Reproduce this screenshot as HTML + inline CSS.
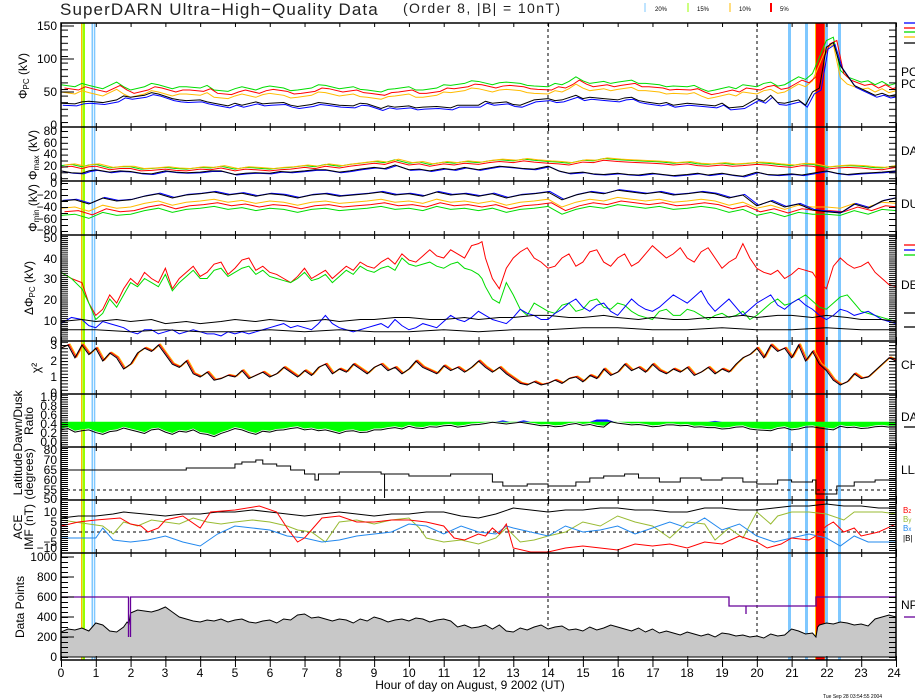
<!DOCTYPE html>
<html><head><meta charset="utf-8"><style>
html,body{margin:0;padding:0;background:#fff;width:915px;height:700px;overflow:hidden}
svg{display:block;font-family:"Liberation Sans",sans-serif}
.t{font-size:12px;fill:#000}
.yl{font-size:12px;text-anchor:end}
path,line,polyline{vector-effect:non-scaling-stroke}
.d path{fill:none;stroke-width:1}
</style></head><body>
<svg width="915" height="700" viewBox="0 0 915 700" xmlns="http://www.w3.org/2000/svg" xmlns:xlink="http://www.w3.org/1999/xlink">
<defs>
<pattern id="hp" x="61" y="0" width="34.7917" height="700" patternUnits="userSpaceOnUse"><rect x="0" y="0" width="1" height="700" fill="#000"/></pattern>
<pattern id="t1" x="0" y="23" width="10" height="6.6" patternUnits="userSpaceOnUse"><rect width="10" height="1" fill="#000"/></pattern>
<pattern id="t2" x="0" y="131" width="10" height="5.9" patternUnits="userSpaceOnUse"><rect width="10" height="1" fill="#000"/></pattern>
<pattern id="t3" x="0" y="183" width="10" height="6" patternUnits="userSpaceOnUse"><rect width="10" height="1" fill="#000"/></pattern>
<pattern id="t4" x="0" y="238" width="10" height="2.05" patternUnits="userSpaceOnUse"><rect width="10" height="1" fill="#000"/></pattern>
<pattern id="t5" x="0" y="345" width="10" height="3.2" patternUnits="userSpaceOnUse"><rect width="10" height="1" fill="#000"/></pattern>
<pattern id="t6" x="0" y="397" width="10" height="2.25" patternUnits="userSpaceOnUse"><rect width="10" height="1" fill="#000"/></pattern>
<pattern id="t7" x="0" y="450" width="10" height="2" patternUnits="userSpaceOnUse"><rect width="10" height="1" fill="#000"/></pattern>
<pattern id="t8" x="0" y="502" width="10" height="2" patternUnits="userSpaceOnUse"><rect width="10" height="1" fill="#000"/></pattern>
<pattern id="t9" x="0" y="557" width="10" height="5" patternUnits="userSpaceOnUse"><rect width="10" height="1" fill="#000"/></pattern>
</defs>
<rect width="915" height="700" fill="#fff"/>

<!-- marker bars -->
<rect x="81" y="23" width="1.2" height="637" fill="#fb0"/>
<rect x="82.5" y="23" width="2.5" height="637" fill="#9f0"/>
<rect x="91.5" y="23" width="1.5" height="637" fill="#7fc8ff"/>
<rect x="93.8" y="23" width="1.5" height="637" fill="#7fc8ff"/>
<rect x="788" y="23" width="3" height="637" fill="#7fc8ff"/>
<rect x="805" y="23" width="3" height="637" fill="#7fc8ff"/>
<rect x="825" y="23" width="3" height="637" fill="#7fc8ff"/>
<rect x="838" y="23" width="3" height="637" fill="#7fc8ff"/>
<rect x="815" y="23" width="10" height="637" fill="#fb0"/>
<rect x="816" y="23" width="8.5" height="637" fill="#f00"/>
<line x1="548" y1="23" x2="548" y2="660" stroke="#000" stroke-dasharray="3,3"/>
<line x1="757" y1="23" x2="757" y2="660" stroke="#000" stroke-dasharray="3,3"/>

<!-- P1 -->
<svg x="61" y="23" width="835" height="104" overflow="hidden" class="d"><g transform="translate(0,102) scale(3.479,-0.66)">
<path stroke="#fb0" transform="translate(0,-8)" d="M0 58L4 55 6 60 8 57 12 52 16 62 18 55 20 50 24 55 26 60 28 58 32 52 34 55 36 55 40 53 42 57 44 50 48 48 50 52 52 55 56 50 58 54 60 56 64 53 66 49 68 50 72 53 74 58 76 57 80 52 84 55 86 51 88 50 92 47 94 51 96 52 100 55 102 50 104 50 108 53 110 58 112 57 116 60 118 64 120 63 124 58 126 61 128 62 132 60 134 57 136 56 140 55 142 60 144 58 146 63 148 70 150 64 152 60 156 63 158 60 160 62 164 65 166 60 168 60 172 58 174 55 176 56 180 55 182 57 184 52 186 48 188 50 192 55 194 52 196 58 200 55 202 60 204 62 206 56 208 58 212 70 214 66 216 75 218 100 220 125 222 130 224 80 226 70 228 66 230 62 232 64 234 58 236 63 238 57 240 60"/>
<path stroke="#0d0" transform="translate(0,3)" d="M0 58L4 55 6 60 8 57 12 52 16 62 18 55 20 50 24 55 26 60 28 58 32 52 34 55 36 55 40 53 42 57 44 50 48 48 50 52 52 55 56 50 58 54 60 56 64 53 66 49 68 50 72 53 74 58 76 57 80 52 84 55 86 51 88 50 92 47 94 51 96 52 100 55 102 50 104 50 108 53 110 58 112 57 116 60 118 64 120 63 124 58 126 61 128 62 132 60 134 57 136 56 140 55 142 60 144 58 146 63 148 70 150 64 152 60 156 63 158 60 160 62 164 65 166 60 168 60 172 58 174 55 176 56 180 55 182 57 184 52 186 48 188 50 192 55 194 52 196 58 200 55 202 60 204 62 206 56 208 58 212 70 214 66 216 75 218 100 220 125 222 130 224 80 226 70 228 66 230 62 232 64 234 58 236 63 238 57 240 60"/>
<path stroke="#f00" transform="translate(1,-2)" d="M0 58L4 55 6 60 8 57 12 52 16 62 18 55 20 50 24 55 26 60 28 58 32 52 34 55 36 55 40 53 42 57 44 50 48 48 50 52 52 55 56 50 58 54 60 56 64 53 66 49 68 50 72 53 74 58 76 57 80 52 84 55 86 51 88 50 92 47 94 51 96 52 100 55 102 50 104 50 108 53 110 58 112 57 116 60 118 64 120 63 124 58 126 61 128 62 132 60 134 57 136 56 140 55 142 60 144 58 146 63 148 70 150 64 152 60 156 63 158 60 160 62 164 65 166 60 168 60 172 58 174 55 176 56 180 55 182 57 184 52 186 48 188 50 192 55 194 52 196 58 200 55 202 60 204 62 206 56 208 58 212 70 214 66 216 75 218 100 220 125 222 130 224 80 226 70 228 66 230 62 232 64 234 58 236 63 238 57 240 60"/>
<path stroke="#00f" transform="translate(0.5,-3)" d="M0 33L4 32 6 35 8 36 12 34 16 38 18 44 20 42 24 45 26 49 28 47 32 40 34 38 36 37 40 38 42 35 44 33 48 29 50 33 52 30 56 35 58 32 60 33 64 34 66 30 68 28 72 31 74 34 76 33 80 30 84 29 86 33 88 32 92 25 94 29 96 27 100 29 102 26 104 27 108 28 112 26 114 30 116 30 120 30 122 36 124 33 128 35 130 31 132 30 136 38 140 40 142 37 144 38 148 45 150 40 152 42 156 40 160 38 162 41 164 42 166 37 168 35 172 32 174 34 176 30 180 33 184 31 188 29 190 33 192 26 196 28 200 40 202 36 204 45 206 34 208 33 212 38 214 30 216 50 218 56 220 118 222 125 224 90 226 75 228 60 230 55 232 50 234 45 236 48 238 44 240 46"/>
<path stroke="#000" stroke-width="1.3" d="M0 33L4 32 6 35 8 36 12 34 16 38 18 44 20 42 24 45 26 49 28 47 32 40 34 38 36 37 40 38 42 35 44 33 48 29 50 33 52 30 56 35 58 32 60 33 64 34 66 30 68 28 72 31 74 34 76 33 80 30 84 29 86 33 88 32 92 25 94 29 96 27 100 29 102 26 104 27 108 28 112 26 114 30 116 30 120 30 122 36 124 33 128 35 130 31 132 30 136 38 140 40 142 37 144 38 148 45 150 40 152 42 156 40 160 38 162 41 164 42 166 37 168 35 172 32 174 34 176 30 180 33 184 31 188 29 190 33 192 26 196 28 200 40 202 36 204 45 206 34 208 33 212 38 214 30 216 50 218 56 220 118 222 125 224 90 226 75 228 60 230 55 232 50 234 45 236 48 238 44 240 46"/>
</g></svg>

<!-- P2 -->
<svg x="61" y="127" width="835" height="54" overflow="hidden" class="d"><g transform="translate(0,51) scale(3.479,-0.59)">
<path stroke="#0d0" transform="translate(0,3)" d="M0 18L3 20 6 16 8 19 10 20 14 14 17 16 20 16 23 12 26 13 30 15 33 13 36 12 40 15 43 14 46 17 50 12 53 15 56 14 60 12 63 14 66 15 70 18 73 16 76 20 80 17 83 20 86 22 90 25 93 23 96 28 100 22 103 24 106 20 110 24 113 22 116 25 120 23 123 26 126 28 130 26 133 29 136 27 140 25 143 24 146 22 150 27 153 26 156 30 160 28 163 27 166 26 170 25 173 24 176 22 180 24 183 21 186 20 190 22 193 20 196 21 200 23 203 22 206 20 210 18 213 21 216 20 220 15 223 17 226 18 230 17 233 15 236 14 240 18"/>
<path stroke="#fb0" transform="translate(1,4)" d="M0 18L3 20 6 16 8 19 10 20 14 14 17 16 20 16 23 12 26 13 30 15 33 13 36 12 40 15 43 14 46 17 50 12 53 15 56 14 60 12 63 14 66 15 70 18 73 16 76 20 80 17 83 20 86 22 90 25 93 23 96 28 100 22 103 24 106 20 110 24 113 22 116 25 120 23 123 26 126 28 130 26 133 29 136 27 140 25 143 24 146 22 150 27 153 26 156 30 160 28 163 27 166 26 170 25 173 24 176 22 180 24 183 21 186 20 190 22 193 20 196 21 200 23 203 22 206 20 210 18 213 21 216 20 220 15 223 17 226 18 230 17 233 15 236 14 240 18"/>
<path stroke="#f00" d="M0 18L3 20 6 16 8 19 10 20 14 14 17 16 20 16 23 12 26 13 30 15 33 13 36 12 40 15 43 14 46 17 50 12 53 15 56 14 60 12 63 14 66 15 70 18 73 16 76 20 80 17 83 20 86 22 90 25 93 23 96 28 100 22 103 24 106 20 110 24 113 22 116 25 120 23 123 26 126 28 130 26 133 29 136 27 140 25 143 24 146 22 150 27 153 26 156 30 160 28 163 27 166 26 170 25 173 24 176 22 180 24 183 21 186 20 190 22 193 20 196 21 200 23 203 22 206 20 210 18 213 21 216 20 220 15 223 17 226 18 230 17 233 15 236 14 240 18"/>
<path stroke="#00f" transform="translate(0.5,-1)" d="M0 12L3 9 6 8 8 12 10 14 14 10 17 12 20 11 23 8 26 7 30 12 33 10 36 9 40 10 43 12 46 12 50 6 53 8 56 9 60 8 63 11 66 10 70 12 73 14 76 14 80 10 83 12 86 15 90 18 93 16 96 22 100 14 103 15 106 12 110 16 113 14 116 18 120 14 123 17 126 20 130 18 133 16 136 15 140 20 143 12 146 8 150 10 153 7 156 6 160 8 163 6 166 5 170 8 173 6 176 4 180 6 183 8 186 5 190 8 193 5 196 3 200 10 203 6 206 5 210 7 213 5 216 8 220 12 223 8 226 6 230 8 233 9 236 10 240 12"/>
<path stroke="#000" stroke-width="1.2" d="M0 12L3 9 6 8 8 12 10 14 14 10 17 12 20 11 23 8 26 7 30 12 33 10 36 9 40 10 43 12 46 12 50 6 53 8 56 9 60 8 63 11 66 10 70 12 73 14 76 14 80 10 83 12 86 15 90 18 93 16 96 22 100 14 103 15 106 12 110 16 113 14 116 18 120 14 123 17 126 20 130 18 133 16 136 15 140 20 143 12 146 8 150 10 153 7 156 6 160 8 163 6 166 5 170 8 173 6 176 4 180 6 183 8 186 5 190 8 193 5 196 3 200 10 203 6 206 5 210 7 213 5 216 8 220 12 223 8 226 6 230 8 233 9 236 10 240 12"/>
</g></svg>

<!-- P3 -->
<svg x="61" y="181" width="835" height="54" overflow="hidden" class="d"><g transform="translate(0,2) scale(3.479,0.6)">
<path stroke="#0d0" transform="translate(0,24)" d="M0 30L4 28 8 35 12 25 16 30 20 28 24 22 28 18 32 25 36 20 40 18 44 15 48 20 52 17 56 22 60 18 64 20 68 25 72 20 76 18 80 22 84 20 88 18 92 15 96 20 100 18 104 22 108 15 112 20 116 18 120 22 124 18 128 25 132 20 136 18 140 15 144 28 148 20 152 15 156 18 160 12 164 15 168 18 172 15 176 20 180 18 184 15 188 18 192 25 196 20 200 30 204 25 208 32 212 25 216 28 220 28 224 30 228 22 232 28 236 20 240 22"/>
<path stroke="#f00" transform="translate(1,18)" d="M0 30L4 28 8 35 12 25 16 30 20 28 24 22 28 18 32 25 36 20 40 18 44 15 48 20 52 17 56 22 60 18 64 20 68 25 72 20 76 18 80 22 84 20 88 18 92 15 96 20 100 18 104 22 108 15 112 20 116 18 120 22 124 18 128 25 132 20 136 18 140 15 144 28 148 20 152 15 156 18 160 12 164 15 168 18 172 15 176 20 180 18 184 15 188 18 192 25 196 20 200 30 204 25 208 32 212 25 216 28 220 28 224 30 228 22 232 28 236 20 240 22"/>
<path stroke="#fb0" transform="translate(0,12)" d="M0 30L4 28 8 35 12 25 16 30 20 28 24 22 28 18 32 25 36 20 40 18 44 15 48 20 52 17 56 22 60 18 64 20 68 25 72 20 76 18 80 22 84 20 88 18 92 15 96 20 100 18 104 22 108 15 112 20 116 18 120 22 124 18 128 25 132 20 136 18 140 15 144 28 148 20 152 15 156 18 160 12 164 15 168 18 172 15 176 20 180 18 184 15 188 18 192 25 196 20 200 30 204 25 208 32 212 25 216 28 220 28 224 30 228 22 232 28 236 20 240 22"/>
<path stroke="#00f" transform="translate(0.5,-1)" d="M0 30L4 28 8 35 12 25 16 30 20 28 24 22 28 18 32 25 36 20 40 18 44 15 48 20 52 17 56 22 60 18 64 20 68 25 72 20 76 18 80 22 84 20 88 18 92 15 96 20 100 18 104 22 108 15 112 20 116 18 120 22 124 18 128 25 132 20 136 18 140 15 144 28 148 20 152 15 156 18 160 12 164 15 168 18 172 15 176 20 180 18 184 15 188 18 192 25 196 20 200 38 204 30 208 40 212 35 216 45 220 48 224 50 228 35 232 42 236 30 240 25"/>
<path stroke="#000" stroke-width="1.2" d="M0 30L4 28 8 35 12 25 16 30 20 28 24 22 28 18 32 25 36 20 40 18 44 15 48 20 52 17 56 22 60 18 64 20 68 25 72 20 76 18 80 22 84 20 88 18 92 15 96 20 100 18 104 22 108 15 112 20 116 18 120 22 124 18 128 25 132 20 136 18 140 15 144 28 148 20 152 15 156 18 160 12 164 15 168 18 172 15 176 20 180 18 184 15 188 18 192 25 196 20 200 38 204 30 208 40 212 35 216 45 220 48 224 50 228 35 232 42 236 30 240 25"/>
</g></svg>

<!-- P4 -->
<svg x="61" y="235" width="835" height="106" overflow="hidden" class="d"><g transform="translate(0,105) scale(3.479,-2.05)">
<path stroke="#f00" d="M0 33L3 30 6 28 8 18 10 12 12 15 14 22 16 18 18 25 20 30 22 27 24 33 26 30 28 28 30 35 32 25 34 30 36 33 38 36 40 31 42 33 44 37 46 38 48 32 50 35 52 39 54 40 56 34 58 36 60 33 62 32 64 30 66 28 68 31 70 35 72 30 74 32 76 34 78 30 80 33 82 36 84 34 86 38 88 36 90 35 92 38 94 40 96 37 98 42 100 39 102 38 104 41 106 44 108 41 110 40 112 44 114 42 116 40 118 46 120 47 121 48 122 40 124 30 126 25 128 35 130 40 132 43 134 45 136 40 138 38 140 35 142 36 144 40 146 42 148 36 150 38 152 43 154 44 156 38 158 36 160 40 162 42 164 36 166 38 168 42 170 46 172 43 174 40 176 42 178 45 180 40 182 38 184 43 186 45 188 40 190 35 192 38 194 40 196 47 198 40 200 35 202 33 204 32 206 34 208 30 210 32 212 35 214 34 216 33 218 28 220 25 222 36 224 40 226 37 228 35 230 36 232 38 234 33 236 30 238 27 240 26"/>
<path stroke="#0d0" d="M0 33L3 30 6 25 8 18 10 10 12 13 14 20 16 16 18 22 20 28 22 26 24 30 26 28 28 26 30 32 32 24 34 28 36 31 38 34 40 30 42 30 44 34 46 35 48 31 50 33 52 35 54 36 56 32 58 34 60 31 62 30 64 29 66 28 68 30 70 33 72 29 74 30 76 32 78 28 80 31 82 34 84 32 86 36 88 34 90 33 92 35 94 36 96 34 98 40 100 37 102 36 104 37 106 38 108 36 110 35 112 37 114 38 116 35 118 34 120 32 121 30 122 26 124 20 126 18 128 28 130 22 132 15 134 12 136 18 138 16 140 14 142 13 144 17 146 18 148 14 150 15 152 19 154 20 156 16 158 15 160 18 162 17 164 14 166 12 168 11 170 10 172 14 174 15 176 12 178 12 180 15 182 14 184 12 186 10 188 12 190 13 192 11 194 12 196 14 198 10 200 12 202 15 204 18 206 20 208 17 210 18 212 20 214 22 216 19 218 16 220 15 222 18 224 21 226 22 228 18 230 14 232 13 234 12 236 11 238 10 240 9"/>
<path stroke="#00f" d="M0 8L3 11 6 10 8 7 10 6 12 9 14 8 16 7 18 6 20 4 22 3 24 5 26 5 28 3 30 4 32 5 34 3 36 4 38 5 40 4 42 3 44 3 46 2 48 4 50 3 52 4 54 3 56 4 58 5 60 6 62 7 64 8 66 6 68 7 70 6 72 5 74 8 76 12 78 8 80 6 82 5 84 4 86 5 88 6 90 7 92 8 94 6 96 10 98 7 100 5 102 6 104 8 106 7 108 6 110 9 112 12 114 10 116 9 118 11 120 14 122 12 124 10 126 9 128 8 130 11 132 15 134 13 136 12 138 10 140 10 142 13 144 15 146 18 148 20 150 16 152 14 154 17 156 18 158 14 160 12 162 16 164 20 166 17 168 15 170 14 172 16 174 19 176 22 178 20 180 18 182 21 184 24 186 18 188 14 190 17 192 20 194 16 196 12 198 15 200 18 202 20 204 22 206 17 208 15 210 18 212 20 214 17 216 15 218 12 220 10 222 12 224 15 226 14 228 12 230 13 232 14 234 12 236 10 238 9 240 8"/>
<path stroke="#000" stroke-width="1.3" d="M0 9L6 10 10 9 16 10 20 9 26 10 30 8 36 9 40 8 46 9 50 10 56 9 60 10 66 9 70 9 76 10 80 9 86 10 90 10 96 11 100 11 106 10 110 10 116 11 120 10 126 11 130 11 136 12 140 12 146 11 150 11 156 12 160 11 166 10 170 11 176 10 180 10 186 11 190 11 196 12 200 11 206 12 210 12 216 11 220 12 226 11 230 10 236 10 240 9"/>
<path stroke="#000" stroke-width="1.3" d="M0 5L10 5 20 4 30 5 40 4 50 4 60 5 70 4 80 5 90 4 100 4 110 5 120 4 130 5 140 5 150 6 160 6 170 5 180 5 190 6 200 5 210 5 220 6 230 5 240 5"/>
</g></svg>

<!-- P5 -->
<svg x="61" y="341" width="835" height="53" overflow="hidden" class="d"><g transform="translate(0,52) scale(3.479,-16)">
<path stroke="#fb0" transform="translate(0.6,0.06)" d="M0 2.8L2 3 4 2.2 6 3 8 2.4 10 2.8 12 2 14 2.5 16 2.2 18 1.5 20 1.8 22 2.5 24 2.8 26 2.6 28 3 30 2.4 32 1.8 34 1.6 36 2 38 1.2 40 1 42 1.3 44 0.8 46 0.9 48 1.1 50 1 52 1.4 54 0.9 56 1.1 58 1.3 60 1 62 1.2 64 1.6 66 1.3 68 1 70 1.4 72 1.1 74 1.6 76 1.8 78 1.2 80 1.5 82 1.3 84 1.8 86 1.5 88 1.2 90 1.6 92 1.8 94 1.4 96 1.6 98 1.2 100 1.5 102 2 104 1.6 106 1.4 108 1.2 110 1.7 112 1.4 114 1.6 116 1.3 118 1.6 120 2 122 1.6 124 1.3 126 1.6 128 1.2 130 0.9 132 0.6 134 0.5 136 0.7 138 0.5 140 0.6 142 0.8 144 0.6 146 0.9 148 1 150 0.7 152 1.1 154 0.9 156 1.5 158 1.1 160 1.3 162 1.8 164 1.4 166 1.6 168 1.3 170 1.8 172 1.4 174 1.2 176 1.5 178 1.3 180 1.6 182 1.1 184 1.3 186 1.6 188 1.2 190 1.5 192 1.3 194 1.8 196 2.2 198 2.4 200 2.8 202 2.2 204 3 206 2.6 208 2.8 210 2.2 212 3 214 2 216 2.6 218 1.8 220 1.4 222 0.8 224 0.5 226 0.7 228 1.2 230 0.9 232 1 234 1.4 236 1.8 238 2.2 240 2"/>
<path stroke="#f00" transform="translate(0.3,0.04)" d="M0 2.8L2 3 4 2.2 6 3 8 2.4 10 2.8 12 2 14 2.5 16 2.2 18 1.5 20 1.8 22 2.5 24 2.8 26 2.6 28 3 30 2.4 32 1.8 34 1.6 36 2 38 1.2 40 1 42 1.3 44 0.8 46 0.9 48 1.1 50 1 52 1.4 54 0.9 56 1.1 58 1.3 60 1 62 1.2 64 1.6 66 1.3 68 1 70 1.4 72 1.1 74 1.6 76 1.8 78 1.2 80 1.5 82 1.3 84 1.8 86 1.5 88 1.2 90 1.6 92 1.8 94 1.4 96 1.6 98 1.2 100 1.5 102 2 104 1.6 106 1.4 108 1.2 110 1.7 112 1.4 114 1.6 116 1.3 118 1.6 120 2 122 1.6 124 1.3 126 1.6 128 1.2 130 0.9 132 0.6 134 0.5 136 0.7 138 0.5 140 0.6 142 0.8 144 0.6 146 0.9 148 1 150 0.7 152 1.1 154 0.9 156 1.5 158 1.1 160 1.3 162 1.8 164 1.4 166 1.6 168 1.3 170 1.8 172 1.4 174 1.2 176 1.5 178 1.3 180 1.6 182 1.1 184 1.3 186 1.6 188 1.2 190 1.5 192 1.3 194 1.8 196 2.2 198 2.4 200 2.8 202 2.2 204 3 206 2.6 208 2.8 210 2.2 212 3 214 2 216 2.6 218 1.8 220 1.4 222 0.8 224 0.5 226 0.7 228 1.2 230 0.9 232 1 234 1.4 236 1.8 238 2.2 240 2"/>
<path stroke="#000" stroke-width="1.3" d="M0 2.8L2 3 4 2.2 6 3 8 2.4 10 2.8 12 2 14 2.5 16 2.2 18 1.5 20 1.8 22 2.5 24 2.8 26 2.6 28 3 30 2.4 32 1.8 34 1.6 36 2 38 1.2 40 1 42 1.3 44 0.8 46 0.9 48 1.1 50 1 52 1.4 54 0.9 56 1.1 58 1.3 60 1 62 1.2 64 1.6 66 1.3 68 1 70 1.4 72 1.1 74 1.6 76 1.8 78 1.2 80 1.5 82 1.3 84 1.8 86 1.5 88 1.2 90 1.6 92 1.8 94 1.4 96 1.6 98 1.2 100 1.5 102 2 104 1.6 106 1.4 108 1.2 110 1.7 112 1.4 114 1.6 116 1.3 118 1.6 120 2 122 1.6 124 1.3 126 1.6 128 1.2 130 0.9 132 0.6 134 0.5 136 0.7 138 0.5 140 0.6 142 0.8 144 0.6 146 0.9 148 1 150 0.7 152 1.1 154 0.9 156 1.5 158 1.1 160 1.3 162 1.8 164 1.4 166 1.6 168 1.3 170 1.8 172 1.4 174 1.2 176 1.5 178 1.3 180 1.6 182 1.1 184 1.3 186 1.6 188 1.2 190 1.5 192 1.3 194 1.8 196 2.2 198 2.4 200 2.8 202 2.2 204 3 206 2.6 208 2.8 210 2.2 212 3 214 2 216 2.6 218 1.8 220 1.4 222 0.8 224 0.5 226 0.7 228 1.2 230 0.9 232 1 234 1.4 236 1.8 238 2.2 240 2"/>
</g></svg>

<!-- P6 -->
<svg x="61" y="394" width="835" height="53" overflow="hidden" class="d"><g transform="translate(0,48) scale(3.479,-45)">
<path fill="#0f0" stroke="none" style="fill:#0f0" d="M0 0.45L0 0.3 2 0.33 4 0.25 6 0.28 8 0.3 10 0.24 12 0.2 14 0.26 16 0.28 18 0.34 20 0.3 22 0.26 24 0.22 26 0.3 28 0.32 30 0.25 32 0.2 34 0.27 36 0.25 38 0.3 40 0.22 42 0.2 44 0.15 46 0.22 48 0.27 50 0.33 52 0.3 54 0.24 56 0.2 58 0.27 60 0.25 62 0.29 64 0.3 66 0.33 68 0.35 70 0.3 72 0.32 74 0.28 76 0.3 78 0.26 80 0.22 82 0.27 84 0.28 86 0.24 88 0.25 90 0.3 92 0.3 94 0.33 96 0.35 98 0.32 100 0.38 102 0.34 104 0.33 106 0.37 108 0.36 110 0.39 112 0.4 114 0.36 116 0.38 118 0.41 120 0.42 122 0.44 124 0.45 128 0.43 132 0.45 136 0.42 138 0.39 140 0.4 142 0.37 144 0.38 146 0.42 148 0.44 150 0.4 152 0.42 154 0.38 156 0.36 158 0.43 160 0.45 162 0.43 164 0.41 166 0.42 168 0.4 170 0.37 172 0.38 174 0.41 176 0.41 178 0.39 180 0.4 182 0.36 184 0.37 186 0.35 188 0.35 190 0.32 192 0.33 194 0.36 196 0.37 198 0.32 200 0.3 202 0.29 204 0.28 206 0.33 208 0.35 210 0.3 212 0.32 214 0.36 216 0.37 218 0.34 220 0.32 222 0.3 224 0.38 226 0.35 228 0.36 230 0.33 232 0.34 234 0.37 236 0.38 238 0.36 240 0.36L240 0.45Z"/>
<path fill="#00f" stroke="none" style="fill:#00f" d="M125 0.45L127 0.48 129 0.45Z M131 0.45L133 0.48 135 0.45Z M152 0.45L154 0.5 157 0.5 159 0.45Z M186 0.45L188 0.47 190 0.45Z"/>
<path stroke="#000" transform="translate(0,-0.03)" d="M0 0.3L2 0.33 4 0.25 6 0.28 8 0.3 10 0.24 12 0.2 14 0.26 16 0.28 18 0.34 20 0.3 22 0.26 24 0.22 26 0.3 28 0.32 30 0.25 32 0.2 34 0.27 36 0.25 38 0.3 40 0.22 42 0.2 44 0.15 46 0.22 48 0.27 50 0.33 52 0.3 54 0.24 56 0.2 58 0.27 60 0.25 62 0.29 64 0.3 66 0.33 68 0.35 70 0.3 72 0.32 74 0.28 76 0.3 78 0.26 80 0.22 82 0.27 84 0.28 86 0.24 88 0.25 90 0.3 92 0.3 94 0.33 96 0.35 98 0.32 100 0.38 102 0.34 104 0.33 106 0.37 108 0.36 110 0.39 112 0.4 114 0.36 116 0.38 118 0.41 120 0.42 122 0.44 124 0.47 128 0.43 132 0.47 136 0.42 138 0.39 140 0.4 142 0.37 144 0.38 146 0.42 148 0.44 150 0.4 152 0.42 154 0.38 156 0.36 158 0.48 160 0.45 162 0.43 164 0.41 166 0.42 168 0.4 170 0.37 172 0.38 174 0.41 176 0.41 178 0.39 180 0.4 182 0.36 184 0.37 186 0.35 188 0.35 190 0.32 192 0.33 194 0.36 196 0.37 198 0.32 200 0.3 202 0.29 204 0.28 206 0.33 208 0.35 210 0.3 212 0.32 214 0.36 216 0.37 218 0.34 220 0.32 222 0.3 224 0.38 226 0.35 228 0.36 230 0.33 232 0.34 234 0.37 236 0.38 238 0.36 240 0.36"/>
</g></svg>

<!-- P7 -->
<line x1="61" y1="490" x2="896" y2="490" stroke="#000" stroke-dasharray="3,3"/>
<svg x="61" y="447" width="835" height="53" overflow="hidden" class="d"><g transform="translate(0,23) scale(3.479,-2)">
<path stroke="#000" stroke-width="1.2" d="M0 0H36V1H50V3H52V4H56V5H58V3H62V2H66V0H70V-2H73V-5H74V-2H80V-1H92V-2H93V-14V-2H100V-3H112V-2H118V-2H124V-6H127V-8H134V-7H140V-8H148V-6H152V-4H156V-3H162V-2H166V-4H172V-6H178V-4H184V-5H190V-4H196V-6H200V-7H206V-5H210V-6H216V-5H217V-12H223V-8H228V-6H234V-5H240"/>
</g></svg>

<!-- P8 -->
<line x1="61" y1="532" x2="896" y2="532" stroke="#000" stroke-dasharray="3,3"/>
<svg x="61" y="500" width="835" height="53" overflow="hidden" class="d"><g transform="translate(0,32) scale(3.479,-2)">
<path stroke="#000" d="M0 7L5 8 10 8 15 9 18 10 24 9 30 8 35 9 40 9 45 10 50 10 55 11 60 10 65 9 70 8 75 9 80 10 85 9 90 8 95 9 100 9 105 10 110 10 115 8 120 7 125 9 130 12 135 11 140 10 145 11 150 11 155 12 160 12 165 11 170 11 175 10 180 10 185 12 190 12 195 11 200 11 205 12 210 13 215 13 220 14 225 13 230 13 235 12 240 12"/>
<path stroke="#9b3" d="M0 6L4 5 8 4 12 3 15 -1 18 5 22 3 26 6 30 5 34 4 38 7 42 5 46 4 50 5 55 6 60 5 65 3 68 1 72 0 76 -5 80 5 85 6 90 4 95 6 100 7 103 2 105 -3 110 -5 115 -4 120 -6 125 -3 128 2 132 -5 136 -4 140 -2 145 0 150 5 155 3 160 8 165 5 170 3 175 -3 180 5 185 4 188 -4 192 2 196 -3 200 10 204 4 206 8 210 10 215 10 220 9 225 6 228 10 232 10 236 10 240 9"/>
<path stroke="#28e" d="M0 -3L5 -3 10 -3 12 2 15 -4 20 -5 25 -4 30 -2 35 -5 40 -7 45 -1 50 3 55 2 60 1 65 -2 70 -3 75 -5 80 -4 85 -2 90 -1 95 0 100 4 105 3 110 -1 115 3 120 0 125 -1 128 3 130 2 135 0 140 -2 145 3 150 0 155 1 160 3 165 -1 170 2 175 5 180 2 185 7 190 1 195 4 200 -2 205 -5 210 -3 215 -1 220 -3 224 -7 228 -2 232 -5 236 -5 240 -5"/>
<path stroke="#f00" stroke-width="2.4" d="M0 3L5 5 10 6 17 7 20 4 23 3 25 0 28 2 30 6 35 8 40 2 43 10 50 11 57 13 62 10 65 2 68 -5 70 -3 75 7 80 8 85 5 90 5 95 6 100 6 105 5 110 3 113 -3 116 -4 120 -1 122 -2 124 2 126 -1 128 4 130 -8 135 -10 140 -10 145 -8 150 -7 155 -8 160 -9 165 -6 170 -7 175 -6 180 -8 185 -5 190 -6 195 -2 200 -5 203 -8 207 -6 210 -3 215 -4 217 -2 220 3 222 5 225 0 228 2 230 -2 235 0 240 4"/>
</g></svg>

<!-- P9 -->
<svg x="61" y="553" width="835" height="107" overflow="hidden" class="d"><g transform="translate(0,104) scale(3.479,-0.1)">
<path style="fill:#c8c8c8" stroke="#000" stroke-width="1.2" d="M0 0L0 250 2 280 4 270 6 290 8 260 10 340 12 320 14 260 16 250 18 300 19 350 19.5 330 20 440 22 470 24 460 26 450 28 470 30 500 32 450 34 400 36 380 38 360 40 350 42 370 44 360 46 380 48 350 50 370 52 380 54 350 56 340 58 360 60 370 62 340 64 380 66 370 68 420 70 430 72 390 74 400 76 380 78 360 80 380 82 370 84 340 86 380 88 360 90 400 92 380 94 350 96 370 98 380 100 360 102 390 104 380 106 350 108 370 110 380 112 360 114 300 116 320 118 290 120 300 122 320 124 280 126 320 128 260 130 250 132 290 134 270 136 300 138 320 140 280 142 300 144 310 146 270 148 280 150 260 152 300 154 270 156 290 158 320 160 300 162 280 164 260 166 290 168 250 170 280 172 240 174 260 176 240 178 220 180 250 182 230 184 210 186 230 188 200 190 240 192 230 194 210 196 220 198 200 200 210 202 190 204 230 206 210 208 220 210 280 212 260 214 230 216 240 217 200 217.5 300 218 320 220 340 222 330 224 350 226 340 228 320 230 330 232 310 234 380 236 400 238 420 240 400L240 0Z"/>
</g></svg>
<path d="M61 597H128.5V637M130.5 637V597H729V606H746V614M746.5 606H816V597H896" stroke="#609" fill="none" stroke-width="1.3"/>

<!-- axes -->
<g stroke="#000" stroke-width="1.5" fill="none">
<rect x="61" y="23" width="835" height="637"/>
<line x1="61" y1="127" x2="896" y2="127"/><line x1="61" y1="181" x2="896" y2="181"/>
<line x1="61" y1="235" x2="896" y2="235"/><line x1="61" y1="341" x2="896" y2="341"/>
<line x1="61" y1="394" x2="896" y2="394"/><line x1="61" y1="447" x2="896" y2="447"/>
<line x1="61" y1="500" x2="896" y2="500"/><line x1="61" y1="553" x2="896" y2="553"/>
</g>
<g fill="url(#hp)">
<rect x="61" y="23" width="836" height="4"/><rect x="61" y="123" width="836" height="8"/>
<rect x="61" y="177" width="836" height="8"/><rect x="61" y="231" width="836" height="8"/>
<rect x="61" y="337" width="836" height="8"/><rect x="61" y="390" width="836" height="8"/>
<rect x="61" y="443" width="836" height="8"/><rect x="61" y="496" width="836" height="8"/>
<rect x="61" y="549" width="836" height="8"/><rect x="61" y="656" width="836" height="11"/>
</g>
<g>
<rect x="61" y="24" width="7" height="102" fill="url(#t1)"/><rect x="889" y="24" width="7" height="102" fill="url(#t1)"/>
<rect x="61" y="128" width="7" height="52" fill="url(#t2)"/><rect x="889" y="128" width="7" height="52" fill="url(#t2)"/>
<rect x="61" y="182" width="7" height="52" fill="url(#t3)"/><rect x="889" y="182" width="7" height="52" fill="url(#t3)"/>
<rect x="61" y="236" width="7" height="104" fill="url(#t4)"/><rect x="889" y="236" width="7" height="104" fill="url(#t4)"/>
<rect x="61" y="342" width="7" height="51" fill="url(#t5)"/><rect x="889" y="342" width="7" height="51" fill="url(#t5)"/>
<rect x="61" y="395" width="7" height="51" fill="url(#t6)"/><rect x="889" y="395" width="7" height="51" fill="url(#t6)"/>
<rect x="61" y="448" width="7" height="51" fill="url(#t7)"/><rect x="889" y="448" width="7" height="51" fill="url(#t7)"/>
<rect x="61" y="501" width="7" height="51" fill="url(#t8)"/><rect x="889" y="501" width="7" height="51" fill="url(#t8)"/>
<rect x="61" y="554" width="7" height="105" fill="url(#t9)"/><rect x="889" y="554" width="7" height="105" fill="url(#t9)"/>
</g>
<g stroke="#000">
<line x1="61" y1="26" x2="74" y2="26"/><line x1="61" y1="59" x2="74" y2="59"/><line x1="61" y1="92" x2="74" y2="92"/>
<line x1="61" y1="557" x2="74" y2="557"/><line x1="61" y1="577" x2="74" y2="577"/><line x1="61" y1="597" x2="74" y2="597"/><line x1="61" y1="617" x2="74" y2="617"/><line x1="61" y1="637" x2="74" y2="637"/>
</g>

<text x="60" y="15" style="font-size:17px;letter-spacing:1.1px" fill="#222">SuperDARN Ultra−High−Quality Data</text>
<text x="403" y="13" style="font-size:14px;letter-spacing:1.4px" fill="#222">(Order 8, |B| = 10nT)</text>
<line x1="645" y1="3" x2="645" y2="12" stroke="#7fc8ff"/><text x="655" y="11" style="font-size:6px">20%</text>
<line x1="688" y1="3" x2="688" y2="12" stroke="#9f0"/><text x="697" y="11" style="font-size:6px">15%</text>
<line x1="730" y1="3" x2="730" y2="12" stroke="#fb0"/><text x="739" y="11" style="font-size:6px">10%</text>
<rect x="770" y="3" width="2" height="9" fill="red"/><text x="780" y="11" style="font-size:6px">5%</text>
<g class="yl">
<text x="57" y="30">150</text><text x="57" y="63">100</text><text x="57" y="96">50</text><text x="57" y="129">0</text>
<text x="57" y="135">80</text><text x="57" y="147">60</text><text x="57" y="158">40</text><text x="57" y="170">20</text><text x="57" y="181">0</text>
<text x="57" y="187">0</text><text x="57" y="199">−20</text><text x="57" y="211">−40</text><text x="57" y="223">−60</text><text x="57" y="234">−80</text>
<text x="57" y="242">50</text><text x="57" y="263">40</text><text x="57" y="283">30</text><text x="57" y="304">20</text><text x="57" y="325">10</text><text x="57" y="345">0</text>
<text x="57" y="349">3</text><text x="57" y="365">2</text><text x="57" y="381">1</text><text x="57" y="397">0</text>
<text x="57" y="401">1.0</text><text x="57" y="410">0.8</text><text x="57" y="419">0.6</text><text x="57" y="428">0.4</text><text x="57" y="437">0.2</text><text x="57" y="446">0.0</text>
<text x="57" y="454">80</text><text x="57" y="464">70</text><text x="57" y="474">65</text><text x="57" y="484">60</text><text x="57" y="494">55</text><text x="57" y="503">50</text>
<text x="57" y="516">10</text><text x="57" y="526">5</text><text x="57" y="536">0</text><text x="57" y="546">−5</text><text x="57" y="552">−10</text>
<text x="57" y="561">1000</text><text x="57" y="581">800</text><text x="57" y="601">600</text><text x="57" y="621">400</text><text x="57" y="641">200</text><text x="57" y="661">0</text>
</g>
<g class="t" style="font-size:12px">
<text transform="translate(27,76) rotate(-90)" text-anchor="middle">Φ<tspan font-size="8" dy="2">PC</tspan><tspan dy="-2"> (kV)</tspan></text>
<text transform="translate(37,155) rotate(-90)" text-anchor="middle">Φ<tspan font-size="8" dy="2">max</tspan><tspan dy="-2"> (kV)</tspan></text>
<text transform="translate(37,208) rotate(-90)" text-anchor="middle">Φ<tspan font-size="8" dy="2">min</tspan><tspan dy="-2"> (kV)</tspan></text>
<text transform="translate(33,288) rotate(-90)" text-anchor="middle">ΔΦ<tspan font-size="8" dy="2">PC</tspan><tspan dy="-2"> (kV)</tspan></text>
<text transform="translate(40,368) rotate(-90)" text-anchor="middle">χ²</text>
<text transform="translate(22,421) rotate(-90)" text-anchor="middle">Dawn/Dusk</text>
<text transform="translate(33,421) rotate(-90)" text-anchor="middle">Ratio</text>
<text transform="translate(22,474) rotate(-90)" text-anchor="middle">Latitude</text>
<text transform="translate(33,474) rotate(-90)" text-anchor="middle">(degrees)</text>
<text transform="translate(22,527) rotate(-90)" text-anchor="middle">ACE</text>
<text transform="translate(33,527) rotate(-90)" text-anchor="middle">IMF (nT)</text>
<text transform="translate(24,607) rotate(-90)" text-anchor="middle">Data Points</text>
</g>
<g class="t" text-anchor="middle" style="font-size:12px">
<text x="61" y="677">0</text><text x="96" y="677">1</text><text x="131" y="677">2</text><text x="165" y="677">3</text><text x="200" y="677">4</text><text x="235" y="677">5</text><text x="270" y="677">6</text><text x="305" y="677">7</text><text x="339" y="677">8</text><text x="374" y="677">9</text><text x="409" y="677">10</text><text x="444" y="677">11</text><text x="479" y="677">12</text><text x="513" y="677">13</text><text x="548" y="677">14</text><text x="583" y="677">15</text><text x="618" y="677">16</text><text x="653" y="677">17</text><text x="687" y="677">18</text><text x="722" y="677">19</text><text x="757" y="677">20</text><text x="792" y="677">21</text><text x="827" y="677">22</text><text x="861" y="677">23</text><text x="894" y="677">24</text>
</g>
<text x="470" y="689" class="t" text-anchor="middle">Hour of day on August, 9 2002 (UT)</text>
<text x="823" y="698" style="font-size:5px">Tue Sep 28 03:54:55 2004</text>
<g class="t">
<text x="901" y="76">PO</text><text x="901" y="88">PO</text>
<text x="901" y="155">DAY</text><text x="901" y="208">DU</text>
<text x="901" y="289">DE</text><text x="901" y="369">CH</text>
<text x="901" y="421">DAY</text><text x="901" y="474">LLA</text>
<text x="901" y="609">NP</text>
<text x="903" y="513" style="font-size:8px" fill="red">B<tspan font-size="6">z</tspan></text>
<text x="903" y="522" style="font-size:8px" fill="#9b3">B<tspan font-size="6">y</tspan></text>
<text x="903" y="531" style="font-size:8px" fill="#28e">B<tspan font-size="6">x</tspan></text>
<text x="903" y="541" style="font-size:8px">|B|</text>
</g>
<g stroke-width="1.3">
<line x1="904" y1="23" x2="915" y2="23" stroke="#00f"/><line x1="904" y1="28" x2="915" y2="28" stroke="red"/>
<line x1="904" y1="32" x2="915" y2="32" stroke="#0d0"/><line x1="904" y1="37" x2="915" y2="37" stroke="#fb0"/>
<line x1="904" y1="43" x2="915" y2="43" stroke="#000"/>
<line x1="904" y1="245" x2="915" y2="245" stroke="red"/><line x1="904" y1="250" x2="915" y2="250" stroke="#00f"/>
<line x1="904" y1="255" x2="915" y2="255" stroke="#0d0"/>
<line x1="904" y1="313" x2="915" y2="313" stroke="#000"/><line x1="904" y1="327" x2="915" y2="327" stroke="#000"/>
<line x1="904" y1="427" x2="915" y2="427" stroke="#000"/>
<line x1="904" y1="617" x2="915" y2="617" stroke="#609"/>
</g>
</svg>
</body></html>
